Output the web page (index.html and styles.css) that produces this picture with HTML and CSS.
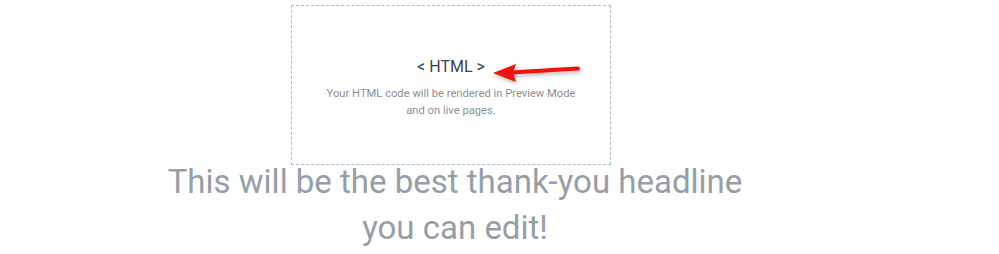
FILE: index.html
```html
<!DOCTYPE html>
<html lang="en">
<head>
    <meta charset="UTF-8">
    <meta name="viewport" content="width=device-width, initial-scale=1.0">
    <title>Thank You</title>
    <link rel="stylesheet" href="styles.css">
</head>
<body>

    <!-- Page column -->
    <div class="stage">

        <!-- HTML widget placeholder -->
        <div class="html-widget">
            <div class="html-title">&lt; HTML &gt;</div>
            <p class="html-note">Your HTML code will be rendered in Preview Mode<br>and on live pages.</p>

            <svg class="arrow" width="96" height="28" viewBox="0 0 96 28">
                <line x1="22" y1="13.5" x2="89" y2="9.5" stroke="#f0120c" stroke-width="4" stroke-linecap="round"/>
                <polygon points="4,14 27,5 24,13.5 27,23" fill="#f0120c"/>
            </svg>
        </div>

        <!-- Headline -->
        <h1 class="headline">This will be the best thank-you headline you can edit!</h1>
    </div>

</body>
</html>
```

FILE: styles.css
```css
body {
    font-family: 'Roboto', 'Liberation Sans', sans-serif;
    background: #ffffff;
    margin: 0;
    padding: 0;
}

/* Page column */
.stage {
    width: 600px;
    margin-left: 155px;
    display: flex;
    flex-direction: column;
}

/* HTML widget placeholder */
.html-widget {
    position: relative;
    box-sizing: border-box;
    width: 320px;
    height: 160px;
    margin: 5px 0 0 136px;
    padding-top: 5px;
    border: 1px dashed #a9bcc8;
    display: flex;
    flex-direction: column;
    justify-content: center;
    align-items: center;
    text-align: center;
}

.html-title {
    font-size: 16px;
    line-height: 20px;
    color: #3a4150;
}

.html-note {
    font-size: 11.2px;
    line-height: 17px;
    color: #8a9097;
    margin: 8px 0 0;
}

.arrow {
    position: absolute;
    left: 197px;
    top: 53px;
    filter: drop-shadow(1px 2px 2px rgba(0, 0, 0, 0.3));
}

/* Headline */
.headline {
    font-size: 33px;
    font-weight: 400;
    line-height: 46px;
    color: #979ea6;
    text-align: center;
    margin: -6px 0 0;
}
```
